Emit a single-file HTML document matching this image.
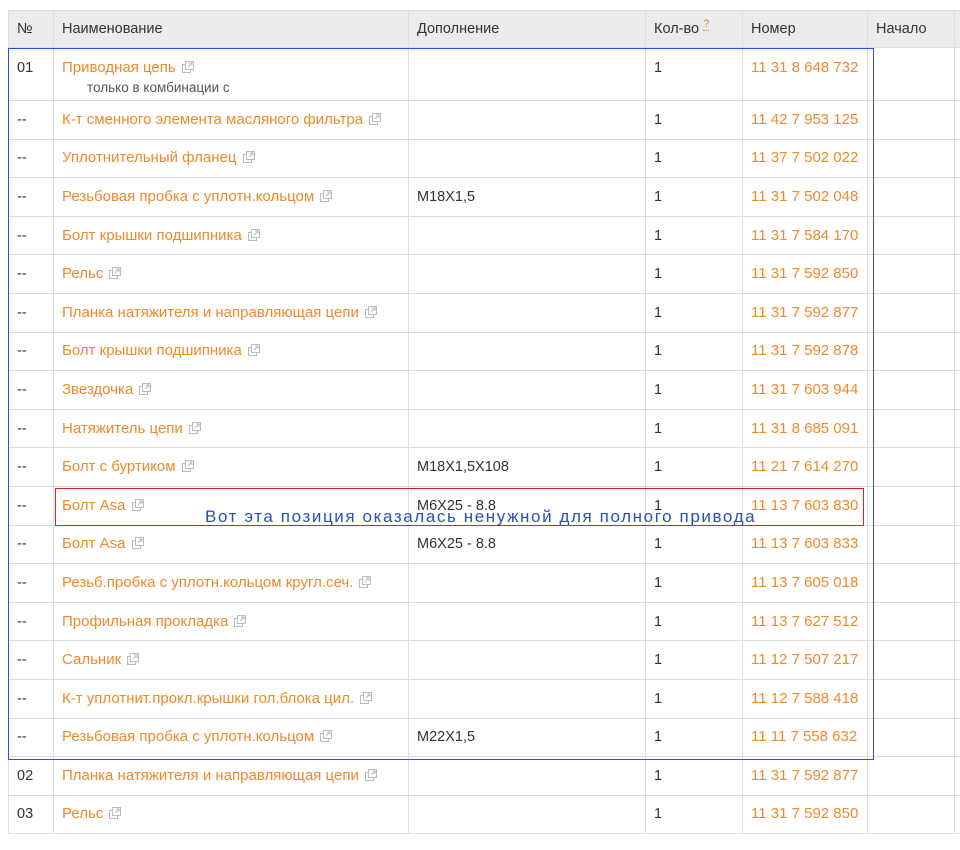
<!DOCTYPE html>
<html><head><meta charset="utf-8"><style>
body{margin:0;background:#fff;width:960px;height:850px;overflow:hidden;position:relative;font-family:"Liberation Sans",sans-serif;font-size:14.5px;color:#333}
table{position:absolute;left:8px;top:10px;border-collapse:collapse;table-layout:fixed;width:1000px}
td,th{border:1px solid #dedede;padding:0 8px;text-align:left;font-weight:normal;white-space:nowrap;overflow:hidden;vertical-align:middle;line-height:20px}
th{background:#ebebeb;height:36px;color:#333}
tr.r td{height:37.6px}
a{color:#f0892a;text-decoration:none;font-size:15px}
.i{display:inline-block;width:12px;height:12px;margin-left:6px;vertical-align:-1px}
.sub{color:#555;font-size:13.5px;padding-left:25px;margin-top:0}
.q{color:#f0892a;font-size:11px;position:relative;top:-6px;line-height:11px;border-bottom:1px dotted #f0892a}
.f td{height:42px;vertical-align:top;padding-top:10px}
</style></head><body>
<svg width="0" height="0" style="position:absolute"><symbol id="ic" viewBox="0 0 12 12"><rect x="0.5" y="3.5" width="8" height="8" fill="#fff" stroke="#bbb"/><rect x="3.5" y="0.5" width="8" height="8" fill="#fff" stroke="#bbb"/><path d="M6 6L10 2M7 2h3v3" stroke="#bbb" fill="none"/></symbol></svg>
<table>
<colgroup><col style="width:45px"><col style="width:355px"><col style="width:237px"><col style="width:97px"><col style="width:125px"><col style="width:87px"><col style="width:54px"></colgroup>
<tr><th>№</th><th>Наименование</th><th>Дополнение</th><th>Кол-во <span class="q">?</span></th><th>Номер</th><th>Начало</th><th></th></tr>
<tr class="f"><td>01</td><td><a>Приводная цепь</a><svg class="i"><use href="#ic"/></svg><div class="sub">только в комбинации с</div></td><td></td><td>1</td><td><a>11 31 8 648 732</a></td><td></td><td></td></tr>
<tr class="r"><td>--</td><td><a>К-т сменного элемента масляного фильтра</a><svg class="i"><use href="#ic"/></svg></td><td></td><td>1</td><td><a>11 42 7 953 125</a></td><td></td><td></td></tr>
<tr class="r"><td>--</td><td><a>Уплотнительный фланец</a><svg class="i"><use href="#ic"/></svg></td><td></td><td>1</td><td><a>11 37 7 502 022</a></td><td></td><td></td></tr>
<tr class="r"><td>--</td><td><a>Резьбовая пробка с уплотн.кольцом</a><svg class="i"><use href="#ic"/></svg></td><td>M18X1,5</td><td>1</td><td><a>11 31 7 502 048</a></td><td></td><td></td></tr>
<tr class="r"><td>--</td><td><a>Болт крышки подшипника</a><svg class="i"><use href="#ic"/></svg></td><td></td><td>1</td><td><a>11 31 7 584 170</a></td><td></td><td></td></tr>
<tr class="r"><td>--</td><td><a>Рельс</a><svg class="i"><use href="#ic"/></svg></td><td></td><td>1</td><td><a>11 31 7 592 850</a></td><td></td><td></td></tr>
<tr class="r"><td>--</td><td><a>Планка натяжителя и направляющая цепи</a><svg class="i"><use href="#ic"/></svg></td><td></td><td>1</td><td><a>11 31 7 592 877</a></td><td></td><td></td></tr>
<tr class="r"><td>--</td><td><a>Болт крышки подшипника</a><svg class="i"><use href="#ic"/></svg></td><td></td><td>1</td><td><a>11 31 7 592 878</a></td><td></td><td></td></tr>
<tr class="r"><td>--</td><td><a>Звездочка</a><svg class="i"><use href="#ic"/></svg></td><td></td><td>1</td><td><a>11 31 7 603 944</a></td><td></td><td></td></tr>
<tr class="r"><td>--</td><td><a>Натяжитель цепи</a><svg class="i"><use href="#ic"/></svg></td><td></td><td>1</td><td><a>11 31 8 685 091</a></td><td></td><td></td></tr>
<tr class="r"><td>--</td><td><a>Болт с буртиком</a><svg class="i"><use href="#ic"/></svg></td><td>M18X1,5X108</td><td>1</td><td><a>11 21 7 614 270</a></td><td></td><td></td></tr>
<tr class="r"><td>--</td><td><a>Болт Asa</a><svg class="i"><use href="#ic"/></svg></td><td>M6X25 - 8.8</td><td>1</td><td><a>11 13 7 603 830</a></td><td></td><td></td></tr>
<tr class="r"><td>--</td><td><a>Болт Asa</a><svg class="i"><use href="#ic"/></svg></td><td>M6X25 - 8.8</td><td>1</td><td><a>11 13 7 603 833</a></td><td></td><td></td></tr>
<tr class="r"><td>--</td><td><a>Резьб.пробка с уплотн.кольцом кругл.сеч.</a><svg class="i"><use href="#ic"/></svg></td><td></td><td>1</td><td><a>11 13 7 605 018</a></td><td></td><td></td></tr>
<tr class="r"><td>--</td><td><a>Профильная прокладка</a><svg class="i"><use href="#ic"/></svg></td><td></td><td>1</td><td><a>11 13 7 627 512</a></td><td></td><td></td></tr>
<tr class="r"><td>--</td><td><a>Сальник</a><svg class="i"><use href="#ic"/></svg></td><td></td><td>1</td><td><a>11 12 7 507 217</a></td><td></td><td></td></tr>
<tr class="r"><td>--</td><td><a>К-т уплотнит.прокл.крышки гол.блока цил.</a><svg class="i"><use href="#ic"/></svg></td><td></td><td>1</td><td><a>11 12 7 588 418</a></td><td></td><td></td></tr>
<tr class="r"><td>--</td><td><a>Резьбовая пробка с уплотн.кольцом</a><svg class="i"><use href="#ic"/></svg></td><td>M22X1,5</td><td>1</td><td><a>11 11 7 558 632</a></td><td></td><td></td></tr>
<tr class="r"><td>02</td><td><a>Планка натяжителя и направляющая цепи</a><svg class="i"><use href="#ic"/></svg></td><td></td><td>1</td><td><a>11 31 7 592 877</a></td><td></td><td></td></tr>
<tr class="r"><td>03</td><td><a>Рельс</a><svg class="i"><use href="#ic"/></svg></td><td></td><td>1</td><td><a>11 31 7 592 850</a></td><td></td><td></td></tr>
</table>
<div style="position:absolute;left:8px;top:48px;width:864px;height:710px;border:1px solid #2a4ff0"></div>
<div style="position:absolute;left:55px;top:488px;width:807px;height:36px;border:1px solid #e02020"></div>
<div style="position:absolute;left:205px;top:507px;color:#2a50b8;font-size:17px;letter-spacing:1.6px;white-space:nowrap">Вот эта позиция оказалась ненужной для полного привода</div>
</body></html>
